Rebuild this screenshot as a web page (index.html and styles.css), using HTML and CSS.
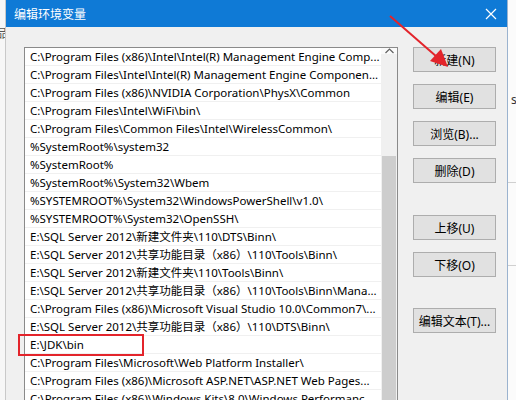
FILE: index.html
```html
<!DOCTYPE html>
<html lang="zh-CN">
<head>
<meta charset="utf-8">
<title>编辑环境变量</title>
<link rel="stylesheet" href="styles.css">
</head>
<body>
<div class="screen">
  <div class="bg-left"><span class="bg-glyph">品</span></div>
  <div class="dialog">
    <div class="titlebar">
      <span class="title">编辑环境变量</span>
      <svg class="close" width="12" height="12" viewBox="0 0 12 12"><path d="M1 1 L11 11 M11 1 L1 11" stroke="#fff" stroke-width="1.2" fill="none"/></svg>
    </div>
    <div class="content">
      <div class="listbox">
        <div class="rows">
          <div class="row">C:\Program Files (x86)\Intel\Intel(R) Management Engine Comp...</div>
          <div class="row">C:\Program Files\Intel\Intel(R) Management Engine Componen...</div>
          <div class="row">C:\Program Files (x86)\NVIDIA Corporation\PhysX\Common</div>
          <div class="row">C:\Program Files\Intel\WiFi\bin\</div>
          <div class="row">C:\Program Files\Common Files\Intel\WirelessCommon\</div>
          <div class="row">%SystemRoot%\system32</div>
          <div class="row">%SystemRoot%</div>
          <div class="row">%SystemRoot%\System32\Wbem</div>
          <div class="row">%SYSTEMROOT%\System32\WindowsPowerShell\v1.0\</div>
          <div class="row">%SYSTEMROOT%\System32\OpenSSH\</div>
          <div class="row">E:\SQL Server 2012\新建文件夹\110\DTS\Binn\</div>
          <div class="row">E:\SQL Server 2012\共享功能目录（x86）\110\Tools\Binn\</div>
          <div class="row">E:\SQL Server 2012\新建文件夹\110\Tools\Binn\</div>
          <div class="row">E:\SQL Server 2012\共享功能目录（x86）\110\Tools\Binn\Mana...</div>
          <div class="row">C:\Program Files (x86)\Microsoft Visual Studio 10.0\Common7\...</div>
          <div class="row">E:\SQL Server 2012\共享功能目录（x86）\110\DTS\Binn\</div>
          <div class="row">E:\JDK\bin</div>
          <div class="row">C:\Program Files\Microsoft\Web Platform Installer\</div>
          <div class="row">C:\Program Files (x86)\Microsoft ASP.NET\ASP.NET Web Pages...</div>
          <div class="row">C:\Program Files (x86)\Windows Kits\8.0\Windows Performanc...</div>
        </div>
        <div class="scrollbar">
          <div class="sb-arrow"><svg width="9" height="6" viewBox="0 0 9 6"><path d="M0.5 5 L4.5 1 L8.5 5" stroke="#606060" stroke-width="1.2" fill="none"/></svg></div>
          <div class="sb-track"><div class="sb-thumb"></div></div>
        </div>
      </div>
      <div class="buttons">
        <div class="group">
          <button class="btn">新建(N)</button>
          <button class="btn">编辑(E)</button>
          <button class="btn">浏览(B)...</button>
          <button class="btn">删除(D)</button>
        </div>
        <div class="group move">
          <button class="btn">上移(U)</button>
          <button class="btn">下移(O)</button>
        </div>
        <div class="group text">
          <button class="btn">编辑文本(T)...</button>
        </div>
      </div>
    </div>
  </div>
  <div class="bg-right">
    <span class="bg-s">s</span>
    <div class="bg-line l1"></div>
    <div class="bg-line l2"></div>
  </div>
  <svg class="annot" width="516" height="400" viewBox="0 0 516 400">
    <rect x="19" y="335" width="124" height="20" fill="none" stroke="#e3242b" stroke-width="2"/>
    <line x1="390" y1="16" x2="437" y2="57" stroke="#e3242b" stroke-width="2"/>
    <polygon points="448,67 430,61 441,49" fill="#e3242b"/>
  </svg>
</div>
</body>
</html>
```
FILE: styles.css
```css
html, body {
  margin: 0;
  padding: 0;
  background: #ffffff;
}
body {
  font-family: "Noto Sans", "Noto Sans CJK SC", sans-serif;
  font-size: 12px;
  color: #000;
  overflow: hidden;
}
.screen {
  position: relative;
  width: 516px;
  height: 400px;
  display: flex;
  overflow: hidden;
}
.bg-left {
  width: 6px;
  background: #f7f7f7;
  border-right: 1px solid #c9c9c9;
  box-sizing: border-box;
  overflow: hidden;
  position: relative;
}
.bg-glyph {
  display: block;
  margin-top: 24px;
  margin-left: -4px;
  font-family: "Noto Sans CJK SC", sans-serif;
  font-size: 12px;
  color: #555;
}
.dialog {
  width: 502px;
  height: 400px;
  background: #f0f0f0;
  border-right: 1px solid #9bb3cf;
  box-sizing: border-box;
  display: flex;
  flex-direction: column;
}
.titlebar {
  height: 27px;
  background: #0f7ad6;
  display: flex;
  align-items: center;
  justify-content: space-between;
  padding: 0 10px 0 8px;
  flex: none;
}
.title {
  color: #fff;
  font-family: "Noto Sans CJK SC", sans-serif;
  font-size: 12px;
  line-height: 27px;
}
.close {
  display: block;
}
.content {
  display: flex;
  padding: 20px 0 0 18px;
  gap: 15px;
  align-items: flex-start;
}
.listbox {
  width: 374px;
  height: 380px;
  background: #fff;
  border: 1px solid #8a8a8a;
  border-bottom: none;
  box-sizing: border-box;
  display: flex;
}
.rows {
  flex: 1;
  min-width: 0;
}
.row {
  height: 18px;
  line-height: 17px;
  font-size: 11.5px;
  box-sizing: border-box;
  border-bottom: 1px solid #f0f0f0;
  padding-left: 5px;
  white-space: nowrap;
  overflow: hidden;
}
.scrollbar {
  width: 16px;
  flex: none;
  display: flex;
  flex-direction: column;
  background: #f0f0f0;
}
.sb-arrow {
  height: 18px;
  display: flex;
  align-items: center;
  justify-content: center;
  background: #fafafa;
}
.sb-track {
  flex: 1;
  padding-top: 102px;
}
.sb-thumb {
  height: 300px;
  margin: 0 1px;
  background: #cdcdcd;
}
.buttons {
  display: flex;
  flex-direction: column;
}
.group {
  display: flex;
  flex-direction: column;
  gap: 12px;
}
.group.move {
  margin-top: 32px;
}
.group.text {
  margin-top: 31px;
}
.btn {
  width: 83px;
  height: 25px;
  background: #e1e1e1;
  border: 1px solid #adadad;
  box-sizing: border-box;
  font-family: "Noto Sans", "Noto Sans CJK SC", sans-serif;
  font-size: 12px;
  color: #000;
  padding: 0;
  margin: 0;
}
.bg-right {
  width: 8px;
  background: #fbfbfb;
  position: relative;
  overflow: hidden;
}
.bg-s {
  display: block;
  margin-top: 93px;
  margin-left: 3px;
  font-size: 12px;
  line-height: 14px;
  color: #333;
}
.bg-line {
  height: 1px;
  background: #d0d0d0;
}
.bg-line.l1 {
  margin-top: 75px;
}
.bg-line.l2 {
  margin-top: 82px;
}
.annot {
  position: absolute;
  left: 0;
  top: 0;
  pointer-events: none;
}
```
